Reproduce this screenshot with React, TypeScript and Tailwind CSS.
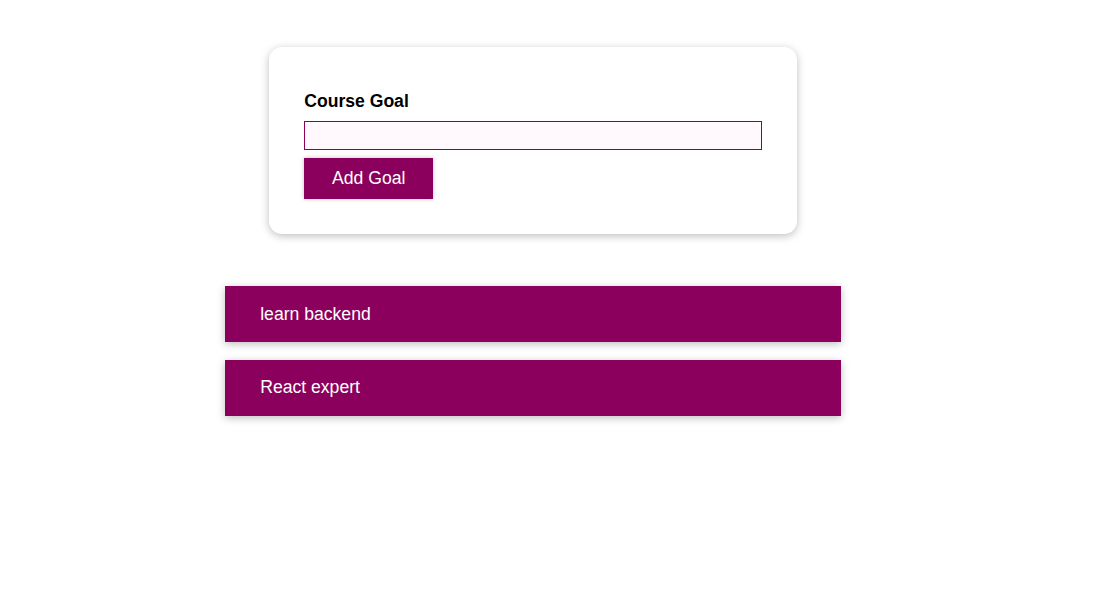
import { useState } from 'react';

const initialGoals = [
  { id: 'g1', text: 'learn backend' },
  { id: 'g2', text: 'React expert' },
];

export default function App() {
  const [goals] = useState(initialGoals);
  const [value, setValue] = useState('');

  return (
    <div className="min-h-[614px] bg-white font-['Liberation_Sans',Arial,sans-serif] text-[17.6px]">
      <div className="w-[1066px] pt-[47px]">
        <form
          className="mx-auto w-[528px] rounded-[13px] bg-white p-[35.2px] shadow-[0_2px_8px_rgba(0,0,0,0.26)]"
          onSubmit={e => e.preventDefault()}
        >
          <div className="my-[8.8px]">
            <label className="mb-[9.6px] block font-bold leading-[20.2px] text-black">Course Goal</label>
            <input
              autoFocus
              type="text"
              value={value}
              onChange={e => setValue(e.target.value)}
              className="block h-[28.8px] w-full border-[1.1px] border-[#8b005d] bg-[#fff8fd] px-[4.4px] leading-[26.4px] caret-black outline-none"
            />
          </div>
          <button
            type="submit"
            className="h-[40.4px] w-[129px] border-[1.1px] border-[#8b005d] bg-[#8b005d] leading-[20.2px] text-white shadow-[0_0_4px_rgba(0,0,0,0.26)]"
          >
            Add Goal
          </button>
        </form>

        <ul className="mx-auto mt-[52px] w-[616px]">
          {goals.map(goal => (
            <li
              key={goal.id}
              className="mb-[17.6px] h-[56px] bg-[#8b005d] px-[35.2px] py-[17.6px] leading-[20.6px] text-white shadow-[0_2px_8px_rgba(0,0,0,0.26)]"
            >
              {goal.text}
            </li>
          ))}
        </ul>
      </div>
    </div>
  );
}
